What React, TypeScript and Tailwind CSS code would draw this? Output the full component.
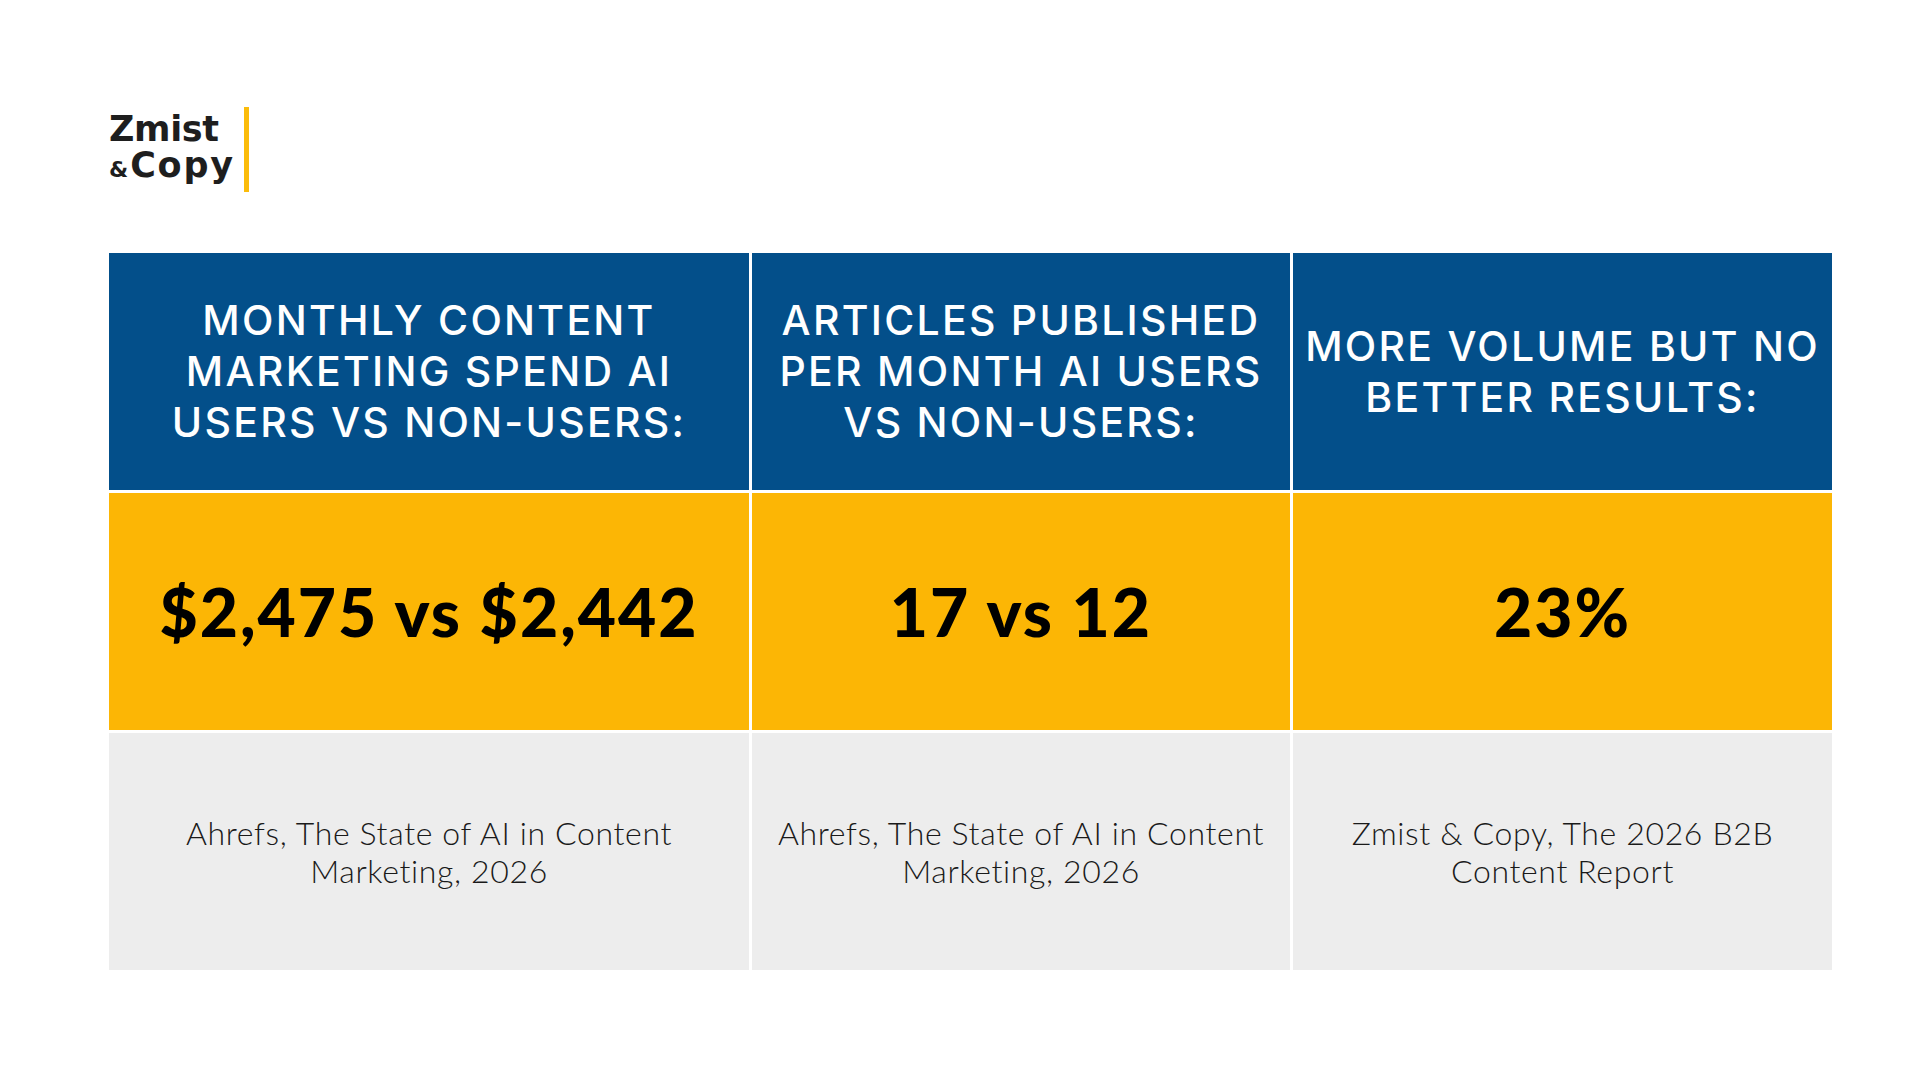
import React from "react";

const heads = [
  "MONTHLY CONTENT MARKETING SPEND AI USERS VS NON-USERS:",
  "ARTICLES PUBLISHED PER MONTH AI USERS VS NON-USERS:",
  "MORE VOLUME BUT NO BETTER RESULTS:",
];

const figures = ["$2,475 vs $2,442", "17 vs 12", "23%"];

const sources = [
  "Ahrefs, The State of AI in Content Marketing, 2026",
  "Ahrefs, The State of AI in Content Marketing, 2026",
  "Zmist & Copy, The 2026 B2B Content Report",
];

const Logo = () => (
  <div className="flex items-stretch h-[85px]">
    <div className="flex flex-col justify-center text-[#1e1e1e] font-bold text-[35px] font-['DejaVu_Sans',sans-serif]">
      <div className="leading-[36px] tracking-[-0.01em]">Zmist</div>
      <div className="leading-[36px]">
        <span className="text-[22px] mr-[2px]">&amp;</span>
        <span className="tracking-[0.05em]">Copy</span>
      </div>
    </div>
    <div className="w-[5px] bg-[#fbbc0b] ml-[9px]" />
  </div>
);

export default function App() {
  return (
    <div className="w-[1920px] h-[1080px] bg-white px-[109px] pt-[107px]">
      <Logo />
      <div className="mt-[61px] grid grid-cols-[640px_538px_539px] grid-rows-[237px_237px_237px] gap-[3px] w-[1723px]">
        {heads.map((h) => (
          <div key={h} className="bg-[#034f8a] flex items-center justify-center px-[8px] text-center text-white font-medium text-[41px] leading-[51px] tracking-[0.055em] font-['Inter',sans-serif]">
            {h}
          </div>
        ))}
        {figures.map((f) => (
          <div key={f} className="bg-[#fcb605] flex items-center justify-center text-center text-black font-black text-[66px] tracking-[0.03em] font-['Lato',sans-serif]">
            {f}
          </div>
        ))}
        {sources.map((s, i) => (
          <div key={i} className="bg-[#ededed] flex items-center justify-center px-[18px] text-center text-[#1a1a1a] font-light text-[32px] leading-[38px] tracking-[0.02em] font-['Lato',sans-serif]">
            <span className="max-w-[500px]">{s}</span>
          </div>
        ))}
      </div>
    </div>
  );
}
